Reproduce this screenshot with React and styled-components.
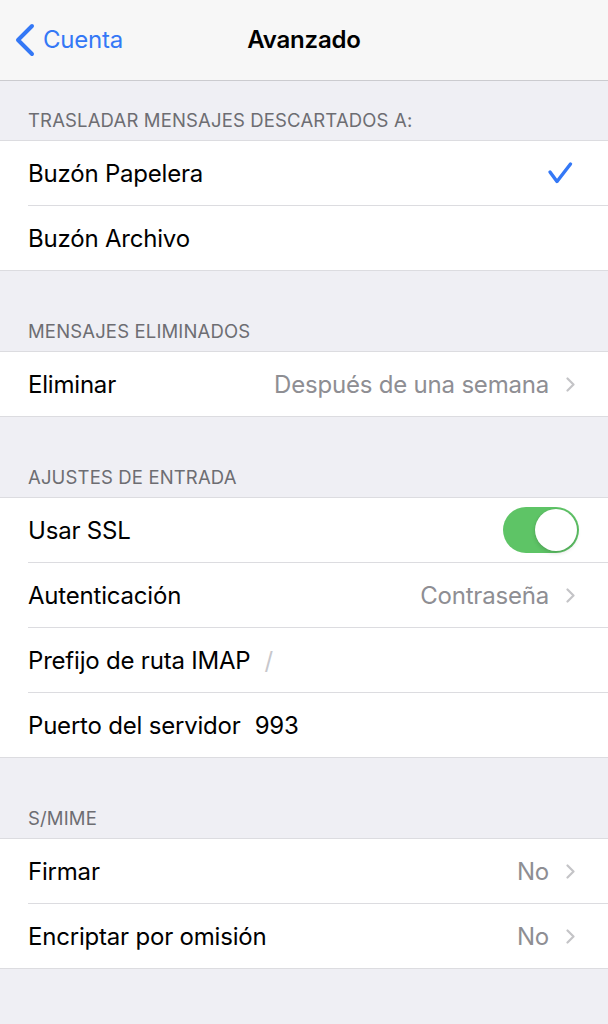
import React from 'react'
import styled, { createGlobalStyle } from 'styled-components'

const GlobalStyle = createGlobalStyle`
    html, body
    {
        margin: 0;
        padding: 0;
        background-color: #efeff4;
    }
    *
    {
        box-sizing: border-box;
    }
`

const Screen = styled.div`
    width: 608px;
    min-height: 1024px;
    background-color: #efeff4;
    font-family: Inter, "Liberation Sans", sans-serif;
    color: #000;
    -webkit-font-smoothing: antialiased;
`
const NavBar = styled.div`
    height: 81px;
    display: grid;
    grid-template-columns: 1fr auto 1fr;
    align-items: center;
    background-color: #f7f7f7;
    border-bottom: 1px solid #cbcbcf;
    padding-bottom: 1px;
`
const BackButton = styled.div`
    display: flex;
    align-items: center;
    padding-left: 14px;
    color: #3478f6;
    font-size: 24px;
    letter-spacing: -0.2px;
    svg
    {
        margin-right: 7px;
    }
`
const Title = styled.h1`
    margin: 0;
    font-size: 24px;
    font-weight: 600;
    letter-spacing: -0.2px;
`
const SectionHeader = styled.div`
    height: ${({ first }) => first ? '59px' : '80px'};
    display: flex;
    align-items: flex-end;
    padding: 0 28px 9px;
    color: #6d6d72;
    font-size: 18.5px;
    line-height: 22px;
    text-transform: uppercase;
    letter-spacing: 0.15px;
`
const Group = styled.div`
    background-color: #fff;
    border-top: 1px solid #dcdce0;
    border-bottom: 1px solid #dcdce0;
`
const Row = styled.div`
    padding-left: 28px;
    &:last-child > div
    {
        border-bottom: none;
        height: 64px;
    }
`
const RowBody = styled.div`
    height: 65px;
    display: flex;
    align-items: center;
    padding-right: 30px;
    border-bottom: 1px solid #dcdce0;
    font-size: 24px;
    letter-spacing: -0.2px;
`
const Label = styled.span`
    flex: ${({ grow }) => grow ? 1 : 'none'};
`
const Field = styled.span`
    margin-left: 14px;
    flex: 1;
    color: ${({ placeholder }) => placeholder ? '#c7c7cc' : '#000'};
`
const Value = styled.span`
    color: #8e8e93;
    margin-right: 17px;
`
const Chevron = styled.svg`
    width: 9px;
    height: 15px;
    margin-right: 3px;
`
const Check = styled.svg`
    width: 26px;
    height: 24px;
    margin-right: 5px;
`
const Toggle = styled.div`
    width: 76px;
    height: 46px;
    border-radius: 23px;
    background-color: #5ec466;
    display: flex;
    align-items: center;
    justify-content: flex-end;
    padding-right: 2px;
    margin-right: -1px;
`
const Knob = styled.div`
    width: 42px;
    height: 42px;
    border-radius: 50%;
    background-color: #fff;
    box-shadow: 0 2px 4px rgba(0, 0, 0, 0.15), 0 0 0 0.5px rgba(0, 0, 0, 0.06);
`

const ChevronIcon = () => (
    <Chevron viewBox="0 0 9 15">
        <path d="M1.5 1.5 L7.5 7.5 L1.5 13.5" fill="none" stroke="#c4c4c7" strokeWidth="2.2" strokeLinecap="round" strokeLinejoin="round" />
    </Chevron>
)

const sections = [
    {
        title: 'Trasladar mensajes descartados a:',
        rows: [
            { label: 'Buzón Papelera', check: true },
            { label: 'Buzón Archivo' },
        ],
    },
    {
        title: 'Mensajes eliminados',
        rows: [{ label: 'Eliminar', value: 'Después de una semana' }],
    },
    {
        title: 'Ajustes de entrada',
        rows: [
            { label: 'Usar SSL', toggle: true },
            { label: 'Autenticación', value: 'Contraseña' },
            { label: 'Prefijo de ruta IMAP', field: '/', placeholder: true },
            { label: 'Puerto del servidor', field: '993' },
        ],
    },
    {
        title: 'S/MIME',
        rows: [
            { label: 'Firmar', value: 'No' },
            { label: 'Encriptar por omisión', value: 'No' },
        ],
    },
]

export default function App() {
    return (
        <Screen>
            <GlobalStyle />
            <NavBar>
                <BackButton>
                    <svg width="22" height="34" viewBox="0 0 22 34">
                        <path d="M18 3 L4 17 L18 31" fill="none" stroke="#3478f6" strokeWidth="4" strokeLinecap="round" strokeLinejoin="round" />
                    </svg>
                    Cuenta
                </BackButton>
                <Title>Avanzado</Title>
                <div />
            </NavBar>
            {sections.map((section, i) => (
                <React.Fragment key={section.title}>
                    <SectionHeader first={i === 0}>{section.title}</SectionHeader>
                    <Group>
                        {section.rows.map(row => (
                            <Row key={row.label}>
                                <RowBody>
                                    <Label grow={!row.field}>{row.label}</Label>
                                    {row.field && <Field placeholder={row.placeholder}>{row.field}</Field>}
                                    {row.value && <Value>{row.value}</Value>}
                                    {row.value && <ChevronIcon />}
                                    {row.check && (
                                        <Check viewBox="0 0 26 24">
                                            <path d="M3 11 L10 20.5 L23.5 3" fill="none" stroke="#3478f6" strokeWidth="3.4" strokeLinecap="round" strokeLinejoin="round" />
                                        </Check>
                                    )}
                                    {row.toggle && <Toggle><Knob /></Toggle>}
                                </RowBody>
                            </Row>
                        ))}
                    </Group>
                </React.Fragment>
            ))}
        </Screen>
    )
}
